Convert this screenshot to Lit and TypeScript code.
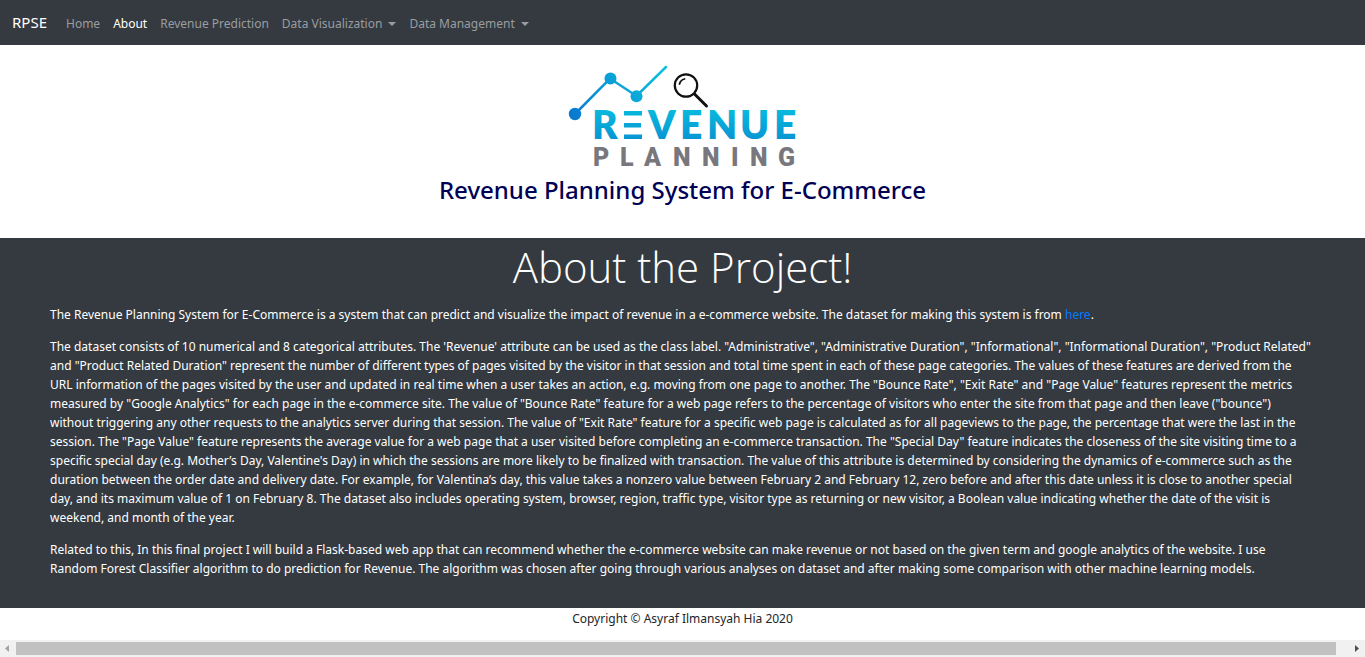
import { LitElement, html, css } from "lit";
import { customElement } from "lit/decorators.js";

@customElement("app-nav")
class AppNav extends LitElement {
  static styles = css`
    :host {
      display: block;
    }
    .bar {
      display: flex;
      align-items: center;
      height: 45px;
      padding: 0 12px;
      box-sizing: border-box;
      background: #343a40;
    }
    .brand {
      margin-right: 13px;
      padding-bottom: 2px;
      font-size: 15px;
      line-height: 24px;
      color: #fff;
      text-decoration: none;
    }
    .menu {
      display: flex;
      gap: 1px;
      margin: 0;
      padding: 2px 0 0;
      list-style: none;
    }
    .item {
      display: flex;
      align-items: center;
      padding: 0 6px;
      border: 0;
      background: none;
      font: inherit;
      font-size: 12px;
      line-height: 20px;
      color: #9a9da0;
      text-decoration: none;
      white-space: nowrap;
      cursor: pointer;
    }
    .active {
      color: #fff;
    }
    .caret {
      margin-left: 6px;
      border: 4px solid transparent;
      border-top-color: currentColor;
      border-bottom: 0;
    }
  `;
  render() {
    return html`
      <nav class="bar">
        <a class="brand" href="#">RPSE</a>
        <ul class="menu">
          <li><a class="item" href="#">Home</a></li>
          <li><a class="item active" href="#">About</a></li>
          <li><a class="item" href="#">Revenue Prediction</a></li>
          <li>
            <button class="item" type="button">Data Visualization<span class="caret"></span></button>
          </li>
          <li>
            <button class="item" type="button">Data Management<span class="caret"></span></button>
          </li>
        </ul>
      </nav>
    `;
  }
}

@customElement("brand-logo")
class BrandLogo extends LitElement {
  static styles = css`
    :host {
      display: block;
    }
    .logo {
      display: block;
    }
    .name {
      font: 800 39px Lato, sans-serif;
    }
    .sub {
      font: 900 25px Roboto, sans-serif;
    }
  `;
  render() {
    return html`
      <svg class="logo" width="245" height="120" viewBox="0 0 245 120" role="img" aria-label="Revenue Planning">
        <defs>
          <linearGradient id="line" gradientUnits="userSpaceOnUse" x1="10" y1="60" x2="106" y2="12">
            <stop offset="0" stop-color="#0a78cf" />
            <stop offset="0.5" stop-color="#0aa0d8" />
            <stop offset="1" stop-color="#0cc0dc" />
          </linearGradient>
          <linearGradient id="word" gradientUnits="userSpaceOnUse" x1="0" y1="56" x2="0" y2="84">
            <stop offset="0" stop-color="#08b8dc" />
            <stop offset="1" stop-color="#0896d4" />
          </linearGradient>
        </defs>
        <path d="M15 59 50 23.500 76.500 41 106 12" fill="none" stroke="url(#line)" stroke-width="2.500" stroke-linecap="round" />
        <g fill="url(#line)">
          <circle cx="15" cy="59" r="6.200" />
          <circle cx="50.500" cy="23.500" r="6" />
          <circle cx="76.500" cy="41.300" r="6" />
        </g>
        <g fill="none" stroke="#111" stroke-linecap="round">
          <circle cx="126" cy="30.500" r="11.200" stroke-width="2.200" />
          <path d="M119.500 29a7 7 0 0 1 5-5" stroke-width="1.800" />
          <path d="m134.500 39 12 12" stroke-width="3" />
        </g>
        <path d="M64 56h18v4.500H64zM64 68h17v4.500H64zM64 79.500h18v4.500H64z" fill="url(#word)" />
        <text class="name" y="84" fill="url(#word)">
          <tspan x="32">R</tspan><tspan x="88">V</tspan><tspan x="120">E</tspan><tspan x="147">N</tspan><tspan x="180">U</tspan><tspan x="214">E</tspan>
        </text>
        <text class="sub" x="33 60 84 113 142 171 190 218" y="111" fill="#77777d">PLANNING</text>
      </svg>
    `;
  }
}

@customElement("app-root")
class AppRoot extends LitElement {
  static styles = css`
    :host {
      display: flex;
      flex-direction: column;
      min-height: 100vh;
      background: #fff;
      font-family: "Noto Sans", sans-serif;
      font-size: 12px;
      line-height: 19px;
      color: #212529;
    }
    .hero {
      display: flex;
      flex-direction: column;
      align-items: center;
      padding: 10px 0 34px;
    }
    .title {
      margin: 0;
      font-size: 24px;
      line-height: 29px;
      font-weight: 500;
      color: #000055;
    }
    .about {
      padding: 3px 50px 30px;
      background: #343a40;
      color: #fff;
    }
    .heading {
      margin: 0 0 12px;
      font-family: "Open Sans", sans-serif;
      font-size: 42px;
      line-height: 52px;
      font-weight: 300;
      text-align: center;
    }
    .text {
      margin: 0 0 13px;
    }
    .text:last-child {
      margin: 0;
    }
    .link {
      color: #007bff;
      text-decoration: none;
    }
    .foot {
      flex: 1;
      padding-top: 1px;
      text-align: center;
    }
    .scroll {
      display: flex;
      align-items: center;
      height: 17px;
      background: #f1f1f1;
    }
    .arrow {
      flex: none;
      width: 16px;
      height: 17px;
      fill: #a3a3a3;
    }
    .right {
      width: 29px;
      fill: #505050;
    }
    .thumb {
      flex: 1;
      height: 13px;
      background: #c1c1c1;
    }
  `;
  render() {
    return html`
      <app-nav></app-nav>
      <header class="hero">
        <brand-logo></brand-logo>
        <h2 class="title">Revenue Planning System for E-Commerce</h2>
      </header>
      <main class="about">
        <h1 class="heading">About the Project!</h1>
        <p class="text">The Revenue Planning System for E-Commerce is a system that can predict and visualize the impact of revenue in a e-commerce website. The dataset for making this system is from <a class="link" href="#">here</a>.</p>
        <p class="text">The dataset consists of 10 numerical and 8 categorical attributes. The 'Revenue' attribute can be used as the class label. "Administrative", "Administrative Duration", "Informational", "Informational Duration", "Product Related" and "Product Related Duration" represent the number of different types of pages visited by the visitor in that session and total time spent in each of these page categories. The values of these features are derived from the URL information of the pages visited by the user and updated in real time when a user takes an action, e.g. moving from one page to another. The "Bounce Rate", "Exit Rate" and "Page Value" features represent the metrics measured by "Google Analytics" for each page in the e-commerce site. The value of "Bounce Rate" feature for a web page refers to the percentage of visitors who enter the site from that page and then leave ("bounce") without triggering any other requests to the analytics server during that session. The value of "Exit Rate" feature for a specific web page is calculated as for all pageviews to the page, the percentage that were the last in the session. The "Page Value" feature represents the average value for a web page that a user visited before completing an e-commerce transaction. The "Special Day" feature indicates the closeness of the site visiting time to a specific special day (e.g. Mother’s Day, Valentine's Day) in which the sessions are more likely to be finalized with transaction. The value of this attribute is determined by considering the dynamics of e-commerce such as the duration between the order date and delivery date. For example, for Valentina’s day, this value takes a nonzero value between February 2 and February 12, zero before and after this date unless it is close to another special day, and its maximum value of 1 on February 8. The dataset also includes operating system, browser, region, traffic type, visitor type as returning or new visitor, a Boolean value indicating whether the date of the visit is weekend, and month of the year.</p>
        <p class="text">Related to this, In this final project I will build a Flask-based web app that can recommend whether the e-commerce website can make revenue or not based on the given term and google analytics of the website. I use Random Forest Classifier algorithm to do prediction for Revenue. The algorithm was chosen after going through various analyses on dataset and after making some comparison with other machine learning models.</p>
      </main>
      <footer class="foot">Copyright © Asyraf Ilmansyah Hia 2020</footer>
      <div class="scroll">
        <svg class="arrow" viewBox="0 0 16 17"><path d="M9 5v7L5 8.500z" /></svg>
        <div class="thumb"></div>
        <svg class="arrow right" viewBox="0 0 29 17"><path d="M19 5v7l4-3.500z" /></svg>
      </div>
    `;
  }
}
